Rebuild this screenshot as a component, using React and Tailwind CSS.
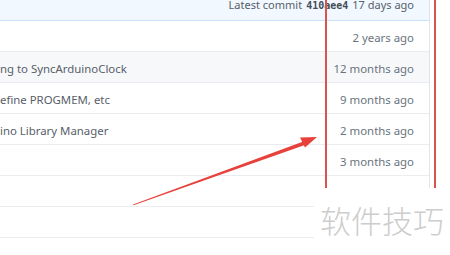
import React from 'react';

const rows = [
  { msg: '', time: '2 years ago' },
  { msg: 'ng to SyncArduinoClock', time: '12 months ago', hover: true },
  { msg: 'efine PROGMEM, etc', time: '9 months ago' },
  { msg: 'ino Library Manager', time: '2 months ago' },
  { msg: '', time: '3 months ago' },
  { msg: '', time: '3 months ago' },
  { msg: '', time: '' },
  { msg: '', time: '' },
];

const App = () => {
  return (
    <div className="relative w-[450px] h-[255px] overflow-hidden bg-white font-['Noto_Sans',sans-serif]">
      <div className="flex">
        {/* File table */}
        <div className="w-[430px] border-r border-[#e1e4e8] flex flex-col">
          <div className="h-[21px] bg-[#f1f8ff] border-b border-[#c8e1ff] flex justify-end pr-[15px] text-[11px] text-[#586069]">
            <div className="-mt-[3px] leading-[16px] flex items-baseline">
              <span>Latest commit</span>
              <span className="ml-[4px] font-['DejaVu_Sans_Mono',monospace] text-[10px] font-bold text-[#444d56]">410aee4</span>
              <span className="ml-[4px]">17 days ago</span>
            </div>
          </div>
          {rows.map((r, i) => (
            <div
              key={i}
              className={`h-[31px] flex items-center justify-between border-b border-[#eaecef] pr-[15px] text-[11.4px] ${r.hover ? 'bg-[#f6f8fa]' : 'bg-white'}`}
            >
              <span className="pt-[3px] text-[#586069] whitespace-nowrap">{r.msg}</span>
              <span className="pt-[3px] text-[#6a737d] whitespace-nowrap">{r.time}</span>
            </div>
          ))}
        </div>
        <div className="flex-1 bg-white"></div>
      </div>

      {/* Red highlight box */}
      <div className="absolute left-[325px] top-0 w-[111px] h-[189px] border-x-2 border-[#d9534f]"></div>

      {/* Arrow annotation */}
      <svg className="absolute left-0 top-0" width="450" height="255" viewBox="0 0 450 255">
        <polygon points="133,204.5 304,141.3 305.6,144.8 133.5,205.2" fill="#e8403a" />
        <polygon points="317,137 300,137.5 305,147.5" fill="#e8403a" />
      </svg>

      {/* Watermark */}
      <div className="absolute left-[314px] top-[188px] w-[136px] h-[67px] bg-white flex items-start pt-[15px] pl-[6px]">
        <span className="text-[31px] leading-[34px] text-[#cdcdcd] font-['Noto_Sans_CJK_SC',sans-serif] font-light">软件技巧</span>
      </div>
    </div>
  );
};

export default App;
